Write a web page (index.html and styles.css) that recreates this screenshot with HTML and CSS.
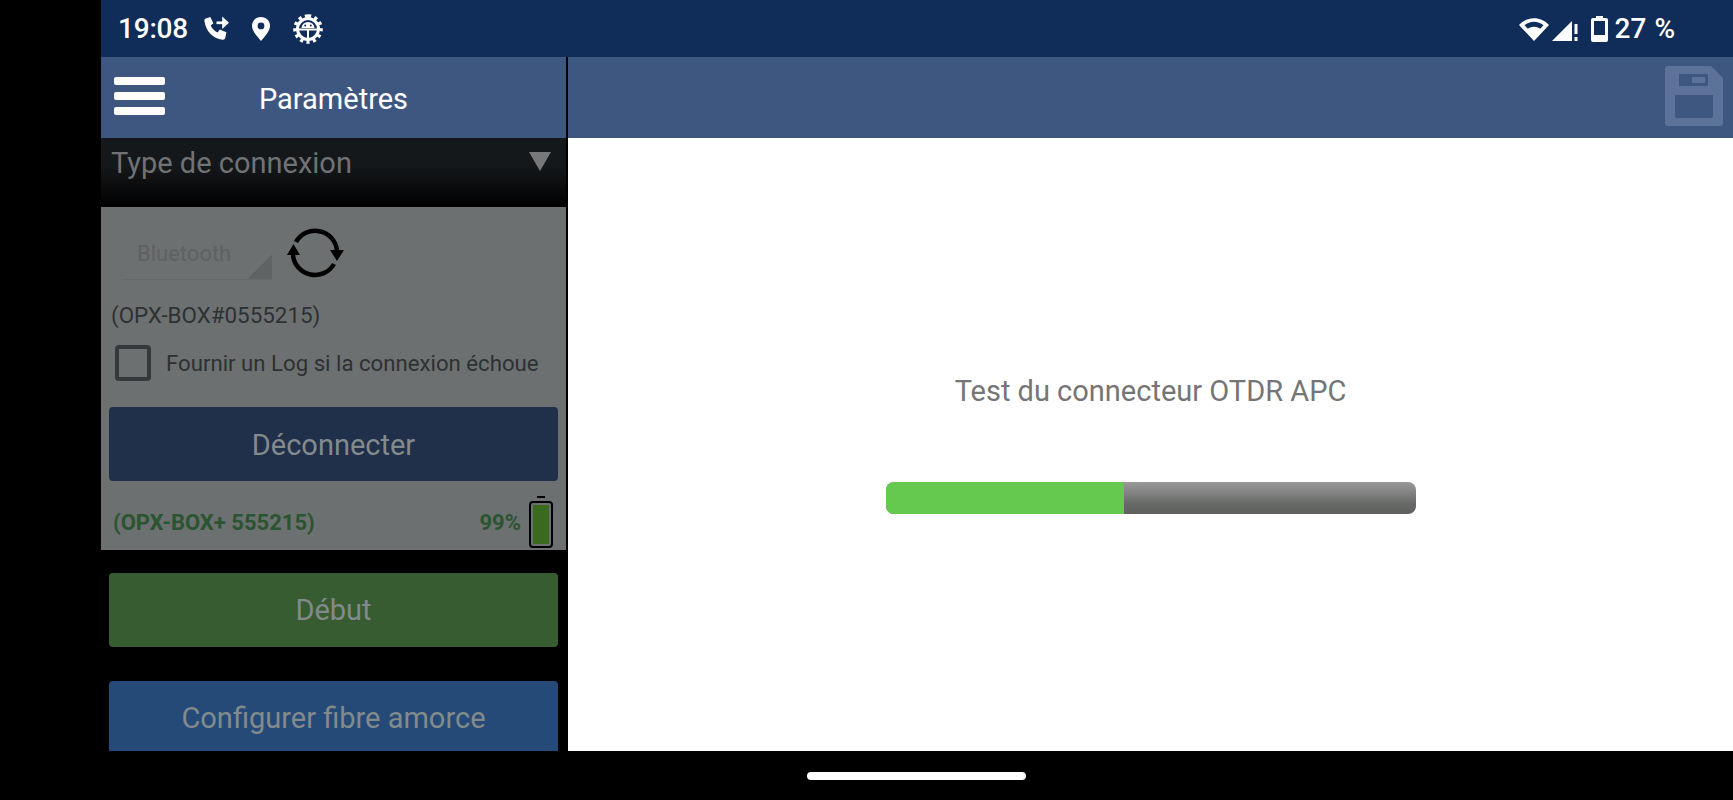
FILE: index.html
```html
<!DOCTYPE html>
<html lang="fr">

<head>
    <meta charset="UTF-8">
    <meta name="viewport" content="width=device-width, initial-scale=1.0">
    <title>Paramètres</title>
    <link rel="stylesheet" href="styles.css">
</head>

<body>
    <div class="screen">
        <div class="app">
            <div class="status">
                <div class="status-left">
                    <span class="time">19:08</span>
                    <svg class="ic-call" viewBox="0 0 26 26">
                        <path fill="#fff" d="M2 3.500 7 2l3 6-2.600 2.200c1.300 3 3.600 5.300 6.600 6.600L16.200 14l6.300 2.600L21.500 22c-.3 1.300-1.300 2-2.700 1.800C9.500 22.600 2.800 15.500 1.500 6.200 1.300 5 1.300 4 2 3.500Z" />
                        <path fill="none" stroke="#fff" stroke-width="2.600" d="M13 7.500h8" />
                        <path fill="#fff" d="M18.500 1.500 25 7.500l-6.500 6Z" />
                    </svg>
                    <svg class="ic-pin" viewBox="0 0 20 26">
                        <path fill="#fff" fill-rule="evenodd" d="M10 1C4.800 1 1 4.900 1 9.800 1 15.600 6.800 21 10 25c3.200-4 9-9.400 9-15.200C19 4.900 15.200 1 10 1Zm0 5.500a3.400 3.400 0 1 1 0 6.800 3.400 3.400 0 0 1 0-6.800Z" />
                    </svg>
                    <svg class="ic-gear" viewBox="0 0 30 30">
                        <circle cx="15" cy="15" r="10.500" fill="none" stroke="#fff" stroke-width="3" />
                        <path stroke="#fff" stroke-width="3.200" stroke-dasharray="3.200 3.400" fill="none" d="M15 1.800a13.200 13.200 0 1 1 0 26.400a13.200 13.200 0 1 1 0-26.400" />
                        <path fill="none" stroke="#fff" stroke-width="2" d="M5 15.500h20M15 15.500v9" />
                        <path fill="#fff" d="M8.500 14a6.500 6 0 0 1 13 0Z" />
                        <circle cx="12.200" cy="11.500" r="1" fill="#102c59" />
                        <circle cx="17.800" cy="11.500" r="1" fill="#102c59" />
                    </svg>
                </div>
                <div class="status-right">
                    <svg class="ic-wifi" viewBox="0 0 30 24">
                        <path fill="#fff" fill-rule="evenodd" d="M15 24 0 8C8-1 22-1 30 8ZM5.500 8.300l3.300 3.500c3.500-2.700 8.900-2.700 12.400 0l3.300-3.500C19.500 3.600 10.500 3.600 5.500 8.300Z" />
                    </svg>
                    <svg class="ic-signal" viewBox="0 0 26 26">
                        <path fill="#fff" d="M0 25 20 5v20Z" />
                        <path fill="#fff" d="M22.500 8h3v10h-3ZM22.500 21h3v4h-3Z" />
                    </svg>
                    <svg class="ic-batt" viewBox="0 0 17 26">
                        <path fill="#fff" fill-rule="evenodd" d="M5 0h7v2h3a2 2 0 0 1 2 2v20a2 2 0 0 1-2 2H2a2 2 0 0 1-2-2V4a2 2 0 0 1 2-2h3ZM3 5v14h11V5Z" />
                    </svg>
                    <span class="pct">27 %</span>
                </div>
            </div>
            <div class="panes">
                <div class="side">
                    <div class="side-head">
                        <div class="burger"><span></span><span></span><span></span></div>
                        <div class="side-title">Paramètres</div>
                    </div>
                    <div class="conn-head">
                        <span>Type de connexion</span>
                        <span class="conn-arrow"></span>
                    </div>
                    <div class="conn-box">
                        <div class="conn-row">
                            <div class="spinner">Bluetooth</div>
                            <svg class="ic-sync" viewBox="0 0 58 50">
                                <path fill="none" stroke="#000" stroke-width="4.500" d="M9 14A22 22 0 0 1 50 22" />
                                <path fill="none" stroke="#000" stroke-width="4.500" d="M6 27A22 22 0 0 0 47 36" />
                                <path fill="#000" d="M6.500 16 0 27h13ZM50 33 43 22h14Z" />
                            </svg>
                        </div>
                        <div class="device">(OPX-BOX#0555215)</div>
                        <div class="log-row">
                            <span class="check"></span>
                            <span>Fournir un Log si la connexion échoue</span>
                        </div>
                        <div class="btn btn-navy">Déconnecter</div>
                        <div class="box-foot">
                            <span>(OPX-BOX+ 555215)</span>
                            <div class="charge">
                                <span>99%</span>
                                <div class="cell"><span class="cell-fill"></span></div>
                            </div>
                        </div>
                    </div>
                    <div class="btn btn-green">Début</div>
                    <div class="btn btn-blue">Configurer fibre amorce</div>
                </div>
                <div class="main">
                    <div class="main-head">
                        <svg class="ic-save" viewBox="0 0 58 60">
                            <path fill="#5d7299" d="M3 0h43l12 12v45a3 3 0 0 1-3 3H3a3 3 0 0 1-3-3V3a3 3 0 0 1 3-3Z" />
                            <path fill="#3e5781" d="M14 8h29v12H14Z" />
                            <path fill="#5d7299" d="M27 11h13v6H27Z" />
                            <path fill="#3e5781" d="M10 29h38v21a2 2 0 0 1-2 2H12a2 2 0 0 1-2-2Z" />
                        </svg>
                    </div>
                    <div class="test">
                        <div class="test-label">Test du connecteur OTDR APC</div>
                        <div class="bar">
                            <div class="bar-fill" style="width: 45%"></div>
                        </div>
                    </div>
                </div>
            </div>
        </div>
    </div>
    <div class="navbar"><span class="pill"></span></div>
</body>

</html>
```

FILE: styles.css
```css
body {
    margin: 0;
    width: 1733px;
    height: 800px;
    overflow: hidden;
    background: black;
    font-family: Roboto, sans-serif;
}

.screen {
    display: flex;
    height: 751px;
    padding-left: 101px;
    box-sizing: border-box;
}

.app {
    flex: 1;
    display: flex;
    flex-direction: column;
    min-width: 0;
}

/* status bar */
.status {
    height: 57px;
    flex: none;
    background: #102c59;
    color: white;
    display: flex;
    justify-content: space-between;
    align-items: center;
    padding: 0 58px 0 17px;
}

.status-left,
.status-right {
    display: flex;
    align-items: center;
}

.time {
    font-size: 28px;
    font-weight: 500;
    width: 85px;
    letter-spacing: -0.2px;
}

.ic-call {
    width: 27px;
    height: 27px;
    margin-right: 21px;
}

.ic-pin {
    width: 20px;
    height: 26px;
    margin-right: 22px;
}

.ic-gear {
    width: 30px;
    height: 30px;
}

.ic-wifi {
    width: 30px;
    height: 24px;
    margin-right: 3px;
}

.ic-signal {
    width: 26px;
    height: 26px;
    margin-right: 13px;
}

.ic-batt {
    width: 17px;
    height: 26px;
    margin-right: 7px;
}

.pct {
    font-size: 28px;
    font-weight: 500;
    word-spacing: 1px;
}

.panes {
    flex: 1;
    display: flex;
    min-height: 0;
}

/* left panel */
.side {
    width: 465px;
    flex: none;
    overflow: hidden;
    border-right: 2px solid black;
}

.side-head {
    height: 81px;
    background: #3e5781;
    display: grid;
    grid-template-columns: 64px 1fr 64px;
    align-items: center;
}

.burger {
    display: flex;
    flex-direction: column;
    gap: 7px;
    margin: 0 0 3px 13px;
    width: 51px;
}

.burger span {
    height: 8px;
    background: white;
    border-radius: 2px;
}

.side-title {
    color: white;
    font-size: 29px;
    text-align: center;
    padding-top: 2px;
}

.conn-head {
    height: 69px;
    box-sizing: border-box;
    padding: 8px 15px 0 10px;
    background: linear-gradient(#15181b, #15181b 40%, #000);
    color: #707274;
    font-size: 29px;
    display: flex;
    justify-content: space-between;
    align-items: flex-start;
}

.conn-arrow {
    width: 0;
    height: 0;
    margin-top: 6px;
    border-left: 11px solid transparent;
    border-right: 11px solid transparent;
    border-top: 19px solid #77787a;
}

.conn-box {
    height: 343px;
    box-sizing: border-box;
    background: #6c7070;
    padding-top: 20px;
}

.conn-row {
    display: flex;
    align-items: center;
    height: 50px;
    padding-left: 21px;
}

.spinner {
    width: 150px;
    height: 50px;
    box-sizing: border-box;
    padding: 11px 0 0 15px;
    font-size: 22px;
    color: #5e6262;
    border-bottom: 1px solid #656969;
    background: linear-gradient(135deg, transparent 50%, #5f6363 50%) right bottom / 24px 24px no-repeat;
    margin-right: 15px;
    margin-top: 6px;
}

.ic-sync {
    width: 58px;
    height: 50px;
    margin-top: 1px;
}

.device {
    margin: 25px 0 0 10px;
    font-size: 22.4px;
    color: #2e3133;
}

.log-row {
    display: flex;
    align-items: center;
    gap: 15px;
    margin: 17px 0 0 14px;
    font-size: 22.2px;
    color: #2e3133;
}

.check {
    width: 36px;
    height: 36px;
    box-sizing: border-box;
    border: 4px solid #36393b;
    border-radius: 4px;
}

.btn {
    margin: 0 8px;
    display: flex;
    align-items: center;
    justify-content: center;
    border-radius: 4px;
    font-size: 29px;
    color: #838a8c;
    height: 74px;
}

.btn-navy {
    background: #202f4a;
    margin-top: 26px;
    padding-top: 2px;
    box-sizing: border-box;
}

.box-foot {
    display: flex;
    justify-content: space-between;
    align-items: center;
    margin: 15px 13px 0 12px;
    font-size: 22px;
    font-weight: bold;
    color: #2b5431;
}

.charge {
    display: flex;
    align-items: center;
    gap: 8px;
}

.cell {
    position: relative;
    width: 24px;
    height: 47px;
    box-sizing: border-box;
    border: 2px solid black;
    border-radius: 4px;
    padding: 2px;
    margin-top: 5px;
}

.cell::before {
    content: "";
    position: absolute;
    top: -7px;
    left: 6px;
    width: 8px;
    height: 2px;
    background: black;
}

.cell-fill {
    display: block;
    height: 100%;
    background: #3a6a1f;
}

.btn-green {
    background: #375c31;
    margin-top: 23px;
}

.btn-blue {
    background: #254a77;
    margin-top: 34px;
}

/* right panel */
.main {
    flex: 1;
    background: white;
    display: flex;
    flex-direction: column;
}

.main-head {
    height: 81px;
    flex: none;
    box-sizing: border-box;
    background: #3e5781;
    display: flex;
    justify-content: flex-end;
    align-items: center;
    padding: 0 10px 4px 0;
}

.ic-save {
    width: 58px;
    height: 60px;
}

.test {
    display: flex;
    flex-direction: column;
    align-items: center;
    padding-top: 237px;
}

.test-label {
    font-size: 29px;
    line-height: 32px;
    color: #757575;
}

.bar {
    width: 530px;
    height: 32px;
    margin-top: 75px;
    border-radius: 8px;
    overflow: hidden;
    background: linear-gradient(#9a9a9a, #666866 70%, #5f615f);
}

.bar-fill {
    height: 100%;
    background: #66c94f;
}

.navbar {
    height: 49px;
    display: flex;
    justify-content: center;
    padding: 21px 0 0 99px;
    box-sizing: border-box;
}

.pill {
    width: 219px;
    height: 8px;
    border-radius: 4px;
    background: white;
}
```
